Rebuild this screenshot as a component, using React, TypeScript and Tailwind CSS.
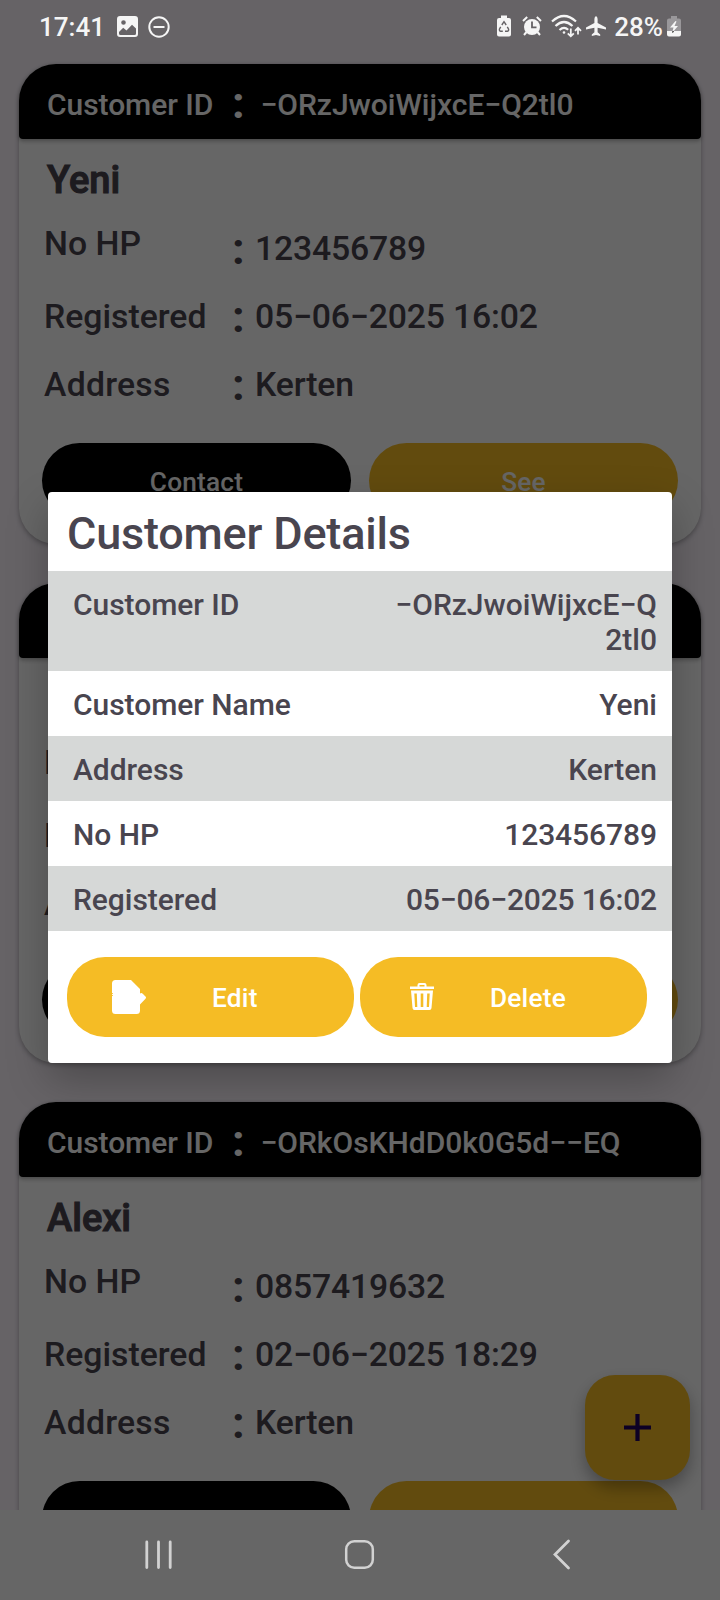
import type { ReactNode } from "react";

type Customer = { id: string; name: string; phone: string; registered: string; address: string; actions?: [string, string] };

const customers: Customer[] = [
  { id: "−ORzJwoiWijxcE−Q2tl0", name: "Yeni", phone: "123456789", registered: "05−06−2025 16:02", address: "Kerten", actions: ["Contact", "See"] },
  { id: "", name: "", phone: "", registered: "", address: "" },
  { id: "−ORkOsKHdD0k0G5d−−EQ", name: "Alexi", phone: "0857419632", registered: "02−06−2025 18:29", address: "Kerten" },
];

function Colon({ className }: { className: string }) {
  return <span className={`w-[22px] shrink-0 text-[45px] leading-[53px] font-bold ${className}`}>:</span>;
}

function Field({ label, value, height, shift }: { label: string; value: string; height: string; shift: string }) {
  return (
    <div className={`flex items-start pl-[25px] text-[33.75px] leading-[39px] ${height}`}>
      <span className={`w-[188px] shrink-0 ${label === "Address" ? "tracking-[0.25px]" : ""}`}>{label}</span>
      <div className={`flex items-start ${shift}`}>
        <Colon className="-mt-[7px]" />
        <span className="ml-px tracking-[-0.17px]">{value}</span>
      </div>
    </div>
  );
}

function CustomerCard({ customer }: { customer: Customer }) {
  return (
    <article className="h-[480px] shrink-0 rounded-[37px] bg-white text-[#49454f] shadow-[0_2px_5px_rgba(0,0,0,0.3)]">
      <header className="flex h-[75px] items-start rounded-t-[37px] rounded-b-[4px] bg-black pl-7 text-[30px] leading-[35px] text-white shadow-[0_2px_4px_rgba(0,0,0,0.3)]">
        <span className="mt-[23px] w-[185px] shrink-0 tracking-[-0.05px]">Customer ID</span>
        <Colon className="mt-3" />
        <span className="mt-[23px] pl-[6.5px] tracking-[-0.02px]">{customer.id}</span>
      </header>
      <h2 className="mt-[19px] mb-[22px] h-11 pl-7 text-[38px] leading-[44px] font-medium [-webkit-text-stroke:1.1px_#49454f]">{customer.name}</h2>
      <Field label="No HP" value={customer.phone} height="h-[73px]" shift="mt-[5px]" />
      <Field label="Registered" value={customer.registered} height="h-[68px]" shift="" />
      <Field label="Address" value={customer.address} height="h-[78px]" shift="" />
      <div className="flex gap-[18px] px-[23px] text-[26.25px] leading-[30px] tracking-[0.2px] text-white">
        <button className="h-[75px] flex-1 rounded-full bg-black pt-0.5 font-medium">{customer.actions?.[0]}</button>
        <button className="h-[75px] flex-1 rounded-full bg-[#f5bc25] pt-0.5 font-medium">{customer.actions?.[1]}</button>
      </div>
    </article>
  );
}

function StatusBar() {
  return (
    <div className="absolute inset-x-0 top-0 flex h-[55px] items-center justify-between pr-[57px] pl-[39px] text-[26px] text-[#f5f5f5]">
      <span>17:41</span>
      <svg className="absolute top-4 left-[117px]" width="21" height="21" viewBox="0 0 21 21">
        <path fillRule="evenodd" fill="currentColor" d="M3 0H18Q21 0 21 3V18Q21 21 18 21H3Q0 21 0 18V3Q0 0 3 0ZM2 16V17.500Q2 19 3.500 19H17.500Q19 19 19 17.500V12.500L15 8.700L9.500 14.500L6.200 11.800ZM6.500 4.200A2.300 2.300 0 1 0 6.500 8.800A2.300 2.300 0 1 0 6.500 4.200Z" />
      </svg>
      <svg className="absolute top-[15.5px] left-[147.5px]" width="22" height="22" viewBox="0 0 22 22" fill="none" stroke="currentColor" strokeWidth="2">
        <circle cx="11" cy="11" r="9.700" />
        <path d="M5.500 11H16.500" />
      </svg>
      <svg className="absolute top-[15px] left-[497px]" width="14" height="22" viewBox="0 0 14 22">
        <path fill="currentColor" d="M4 .5H10V3H12Q14 3 14 5V19.500Q14 21.500 12 21.500H2Q0 21.500 0 19.500V5Q0 3 2 3H4Z" />
        <path d="M4.800 10L7 6.700L9.200 10M10.300 11.800L11.600 14.200Q11.800 16.200 10.300 16.300H8M5.800 16.300H3.700Q2.200 16.200 2.400 14.200L3.700 11.800" fill="none" stroke="#656265" strokeWidth="1.400" />
      </svg>
      <svg className="absolute top-4 left-[522px]" width="20" height="20" viewBox="0 0 20 20">
        <circle cx="10" cy="11" r="8" fill="currentColor" />
        <path d="M1 5L5.200 1M19 5L14.800 1M4.500 16L2 19M15.500 16L18 19" stroke="currentColor" strokeWidth="2" />
        <path d="M10 5.500V11.300H14.500" fill="none" stroke="#656265" strokeWidth="1.800" />
      </svg>
      <svg className="absolute top-[14px] left-[551px]" width="31" height="24" viewBox="0 0 31 24" fill="none" stroke="currentColor" strokeWidth="2.200">
        <path d="M1 7.500Q13 -3.500 25 7.500M4.500 12Q13 4 21.500 12M8.500 16Q13 12 17.200 15.800" />
        <circle cx="13" cy="18.500" r="1.300" fill="currentColor" stroke="none" />
        <path strokeWidth="1.800" d="M19.800 14.500V22M16.800 19.300L19.800 22.300L22.800 19.300M27 20.500V13.500M24 16.800L27 13.800L30 16.800" />
      </svg>
      <svg className="absolute top-4 left-[586px]" width="20" height="20" viewBox="0 0 20 20">
        <path fill="currentColor" d="M10 0Q11.600 .8 11.600 3V7L20 11.500V13.500L11.600 11.800V16.200L14.200 18.500V20L10 19L5.800 20V18.500L8.400 16.200V11.800L0 13.500V11.500L8.400 7V3Q8.400 .8 10 0Z" />
      </svg>
      <span>28%</span>
      <svg className="absolute top-[15px] left-[667px]" width="14" height="22" viewBox="0 0 14 22">
        <path fill="#99979a" d="M4 1H10V3.500H12Q14 3.500 14 5.500V16H0V5.500Q0 3.500 2 3.500H4Z" />
        <path fill="currentColor" d="M0 16H14V19.500Q14 21.500 12 21.500H2Q0 21.500 0 19.500ZM8.500 6L3 12.500H6.500L5 18L11 11H7.500L9.500 6.500Z" />
        <path d="M5.500 17.500L6.500 16" stroke="#333" strokeWidth="1.200" />
      </svg>
    </div>
  );
}

function DetailRow({ label, children, shaded }: { label: string; children: ReactNode; shaded?: boolean }) {
  return (
    <div className={`flex items-start justify-between pt-4 pr-[15px] pb-[14px] pl-[25px] leading-[35px] ${shaded ? "bg-[#d6d8d7]" : "bg-white"}`}>
      <dt className="tracking-[-0.04px]">{label}</dt>
      <dd className="text-right">{children}</dd>
    </div>
  );
}

function CustomerDialog() {
  return (
    <section className="absolute top-[492px] left-12 h-[571px] w-[624px] overflow-hidden rounded-[4px] bg-white text-[#49454f]">
      <h1 className="h-[79px] pt-[15px] pl-[19px] text-[45px] leading-[53px] tracking-[-0.19px]">Customer Details</h1>
      <dl className="text-[30px]">
        <DetailRow label="Customer ID" shaded>−ORzJwoiWijxcE−Q<br />2tl0</DetailRow>
        <DetailRow label="Customer Name">Yeni</DetailRow>
        <DetailRow label="Address" shaded>Kerten</DetailRow>
        <DetailRow label="No HP"><span className="tracking-[-0.07px]">123456789</span></DetailRow>
        <DetailRow label="Registered" shaded><span className="tracking-[-0.17px]">05−06−2025 16:02</span></DetailRow>
      </dl>
      <div className="flex gap-[6px] pt-[26px] pl-[19px] text-[26.25px] leading-[30px] tracking-[0.2px] text-white">
        <button className="flex h-20 w-[287px] items-center rounded-[38px] bg-[#f5bc25] pl-[45px] font-medium">
          <svg width="34" height="34" viewBox="0 0 34 34" fill="currentColor">
            <path d="M3.500 0H19L28 9V13.500Q29.500 12.500 31 14L33.500 16.500Q34.500 17.500 33.500 18.700L28 24.500V30.500Q28 34 24.500 34H3.500Q0 34 0 30.500V3.500Q0 0 3.500 0Z" />
            <path d="M0 13.500H1M0 15.500H1" stroke="#f5bc25" strokeWidth="0.800" />
          </svg>
          <span className="ml-[66px] pt-0.5">Edit</span>
        </button>
        <button className="flex h-20 w-[287px] items-center rounded-[38px] bg-[#f5bc25] pl-[50px] font-medium">
          <svg width="24" height="27" viewBox="0 0 24 27" className="-mt-px" fill="currentColor">
            <path fillRule="evenodd" d="M7.500 3.500V2Q7.500 0 9.500 0H14.500Q16.500 0 16.500 2V3.500H24V6H0V3.500ZM9.500 3.500H14.500V2H9.500ZM1 7.500H23L21.500 25Q21.300 27 19.500 27H4.500Q2.700 27 2.500 25ZM4.300 10.500L5 24H7.300L6.800 10.500ZM10.700 10.500V24H13.300V10.500ZM17.200 10.500L16.700 24H19L19.700 10.500Z" />
          </svg>
          <span className="ml-14 pt-0.5">Delete</span>
        </button>
      </div>
    </section>
  );
}

function NavBar() {
  return (
    <nav className="absolute inset-x-0 bottom-0 h-[90px] bg-[#666]">
      <svg width="720" height="90" viewBox="0 0 720 90" fill="none" stroke="#d2d2d2" strokeWidth="2.800" strokeLinecap="round">
        <path d="M146.800 32V57.500M158.500 32V57.500M170.200 32V57.500" />
        <rect x="346.200" y="31.200" width="26.600" height="26.600" rx="8" strokeWidth="2.500" />
        <path d="M568.500 31L555 44.500L568.500 58" strokeLinejoin="miter" />
      </svg>
    </nav>
  );
}

export default function App() {
  return (
    <div className="relative h-[1600px] w-[720px] overflow-hidden bg-[#fef7ff] font-['Roboto',sans-serif] font-medium">
      <main className="flex h-[1510px] flex-col gap-[39px] overflow-hidden px-[19px] pt-16">
        {customers.map((customer, index) => (
          <CustomerCard key={index} customer={customer} />
        ))}
      </main>
      <button className="absolute top-[1375px] left-[585px] flex h-[105px] w-[105px] items-center justify-center rounded-[30px] bg-[#f5bc25] shadow-[0_8px_16px_rgba(0,0,0,0.3)]">
        <svg width="27" height="27" viewBox="0 0 27 27" stroke="#21005d" strokeWidth="4.200">
          <path d="M13.500 0V27M0 13.500H27" />
        </svg>
      </button>
      <div className="absolute inset-0 bg-black/60" />
      <div className="absolute top-[492px] left-12 h-[571px] w-[624px] rounded-[4px] shadow-[0_16px_40px_rgba(0,0,0,0.26)]" />
      <CustomerDialog />
      <StatusBar />
      <NavBar />
    </div>
  );
}
